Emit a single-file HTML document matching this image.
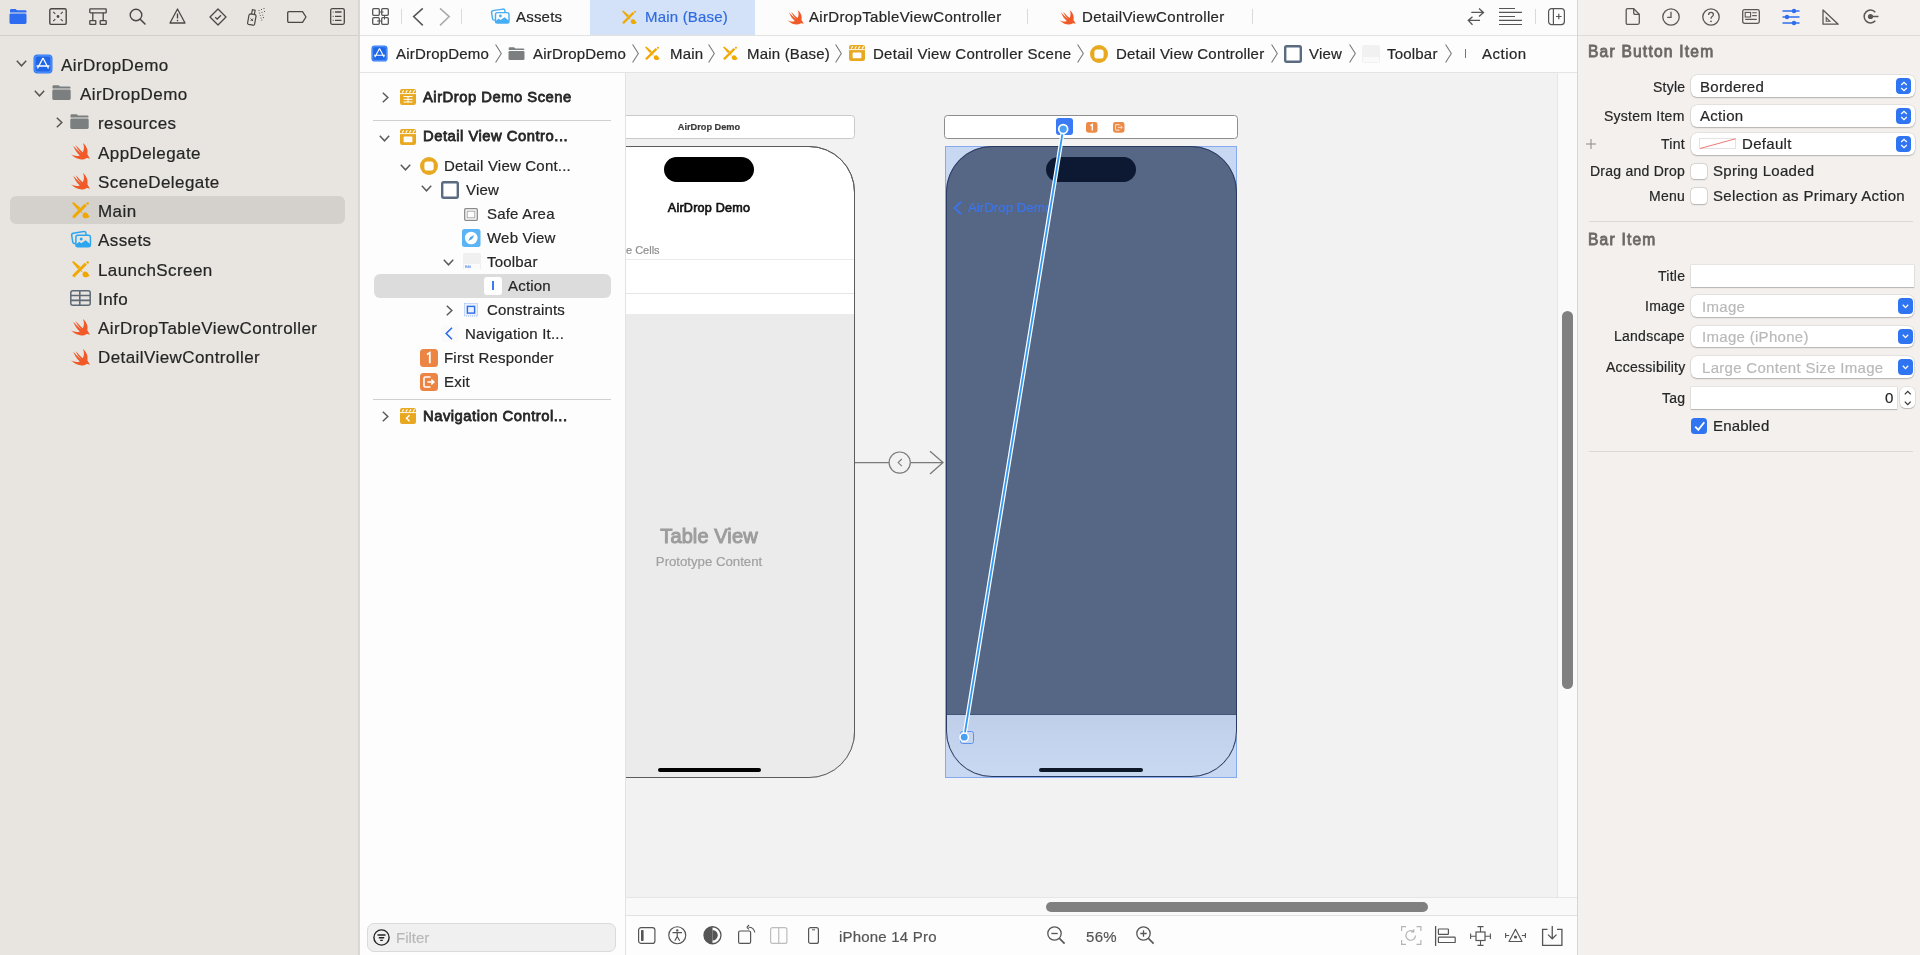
<!DOCTYPE html>
<html><head><meta charset="utf-8">
<style>
*{box-sizing:border-box;margin:0;padding:0}
html,body{width:1920px;height:955px;overflow:hidden;background:#fff;font-family:"Liberation Sans",sans-serif;color:#262626;position:relative}
.a{position:absolute}
.t{position:absolute;white-space:nowrap;will-change:transform;-webkit-text-stroke:0.2px currentColor}
svg{position:absolute;overflow:visible}
</style></head><body>
<div class="a" style="left:0px;top:0px;width:358px;height:955px;background:#e8e5e1"></div>
<div class="a" style="left:358px;top:0px;width:2px;height:955px;background:#dbd8d4"></div>
<div class="a" style="left:0px;top:35px;width:358px;height:1px;background:#d3d0cc"></div>
<svg style="left:9px;top:9px;" width="18" height="15" viewBox="0 0 18 15"><path d="M1 1.2Q1 0 2.2 0H6.5L8 1.3H16.5Q17.5 1.3 17.5 2.5V3.4H1Z" fill="#2d6cf0"/><rect x="0.5" y="4.4" width="17" height="10.6" rx="1.4" fill="#2d6cf0"/></svg>
<svg style="left:49px;top:8px;" width="18" height="17" viewBox="0 0 18 17"><rect x="0.8" y="0.8" width="16.4" height="15.6" rx="1.5" fill="none" stroke="#4a4744" stroke-width="1.4"/><circle cx="9" cy="8.5" r="1.4" fill="#4a4744"/><path d="M4.2 3.8L6.3 5.9M13.8 3.8L11.7 5.9M4.2 13.2L6.3 11.1M13.8 13.2L11.7 11.1" stroke="#4a4744" stroke-width="1.1"/></svg>
<svg style="left:89px;top:8px;" width="18" height="17" viewBox="0 0 18 17"><rect x="0.8" y="0.8" width="16.4" height="4" rx="0.6" fill="none" stroke="#4a4744" stroke-width="1.3"/><rect x="0.8" y="12.6" width="6" height="3.8" rx="0.6" fill="none" stroke="#4a4744" stroke-width="1.3"/><rect x="11.2" y="12.6" width="6" height="3.8" rx="0.6" fill="none" stroke="#4a4744" stroke-width="1.3"/><path d="M3.8 4.8V12.6M14.2 4.8V12.6" stroke="#4a4744" stroke-width="1.3"/></svg>
<svg style="left:129px;top:8px;" width="18" height="17" viewBox="0 0 18 17"><circle cx="7" cy="7" r="5.8" fill="none" stroke="#4a4744" stroke-width="1.4"/><path d="M11.2 11.2L16 16" stroke="#4a4744" stroke-width="1.6" stroke-linecap="round"/></svg>
<svg style="left:169px;top:8px;" width="17" height="16" viewBox="0 0 17 16"><path d="M8.5 1L16 15H1Z" fill="none" stroke="#4a4744" stroke-width="1.3" stroke-linejoin="round"/><path d="M8.5 5.5V10.5" stroke="#4a4744" stroke-width="1.4"/><circle cx="8.5" cy="12.6" r="0.8" fill="#4a4744"/></svg>
<svg style="left:209px;top:8px;" width="18" height="18" viewBox="0 0 18 18"><path d="M9 1L17 9L9 17L1 9Z" fill="none" stroke="#4a4744" stroke-width="1.3" stroke-linejoin="round"/><path d="M6.2 9.2L8.2 11L12 7.2" fill="none" stroke="#4a4744" stroke-width="1.3"/></svg>
<svg style="left:247px;top:8px;" width="21" height="18" viewBox="0 0 21 18"><path d="M2 7.2Q2.3 5.8 3.6 5.8L8 6.7Q9.2 7 9 8.3L7.6 16.2Q7.3 17.5 6 17.2L1.6 16.4Q0.4 16.1 0.6 14.9Z" fill="none" stroke="#4a4744" stroke-width="1.2"/><path d="M4.6 6L5.4 1.7L8.1 2.2L7.4 6.5" fill="none" stroke="#4a4744" stroke-width="1.2"/><path d="M3.6 10.6L6 13M6 10.6L3.6 13" stroke="#4a4744" stroke-width="1"/><g fill="#4a4744"><circle cx="12" cy="2.5" r="0.55"/><circle cx="14.5" cy="1.5" r="0.55"/><circle cx="17" cy="0.6" r="0.55"/><circle cx="12.5" cy="5" r="0.55"/><circle cx="15" cy="4.2" r="0.55"/><circle cx="17.5" cy="3.5" r="0.55"/><circle cx="13.3" cy="7.5" r="0.55"/><circle cx="15.8" cy="7" r="0.55"/><circle cx="14" cy="10" r="0.55"/><circle cx="16.5" cy="9.6" r="0.55"/><circle cx="14.8" cy="12" r="0.55"/></g></svg>
<svg style="left:287px;top:11px;" width="20" height="12" viewBox="0 0 20 12"><path d="M2 0.7H15.5L19 6L15.5 11.3H2Q0.7 11.3 0.7 10V2Q0.7 0.7 2 0.7Z" fill="none" stroke="#4a4744" stroke-width="1.3" stroke-linejoin="round"/></svg>
<svg style="left:330px;top:8px;" width="15" height="17" viewBox="0 0 15 17"><rect x="0.7" y="0.7" width="13.6" height="15.6" rx="1.5" fill="none" stroke="#4a4744" stroke-width="1.3"/><path d="M5 4H11.5M5 8.3H11.5M5 12.3H11.5" stroke="#4a4744" stroke-width="1.3"/><circle cx="3.2" cy="4" r="0.6" fill="#4a4744"/><circle cx="3.2" cy="8.3" r="0.6" fill="#4a4744"/><circle cx="3.2" cy="12.3" r="0.6" fill="#4a4744"/></svg>
<div class="a" style="left:10px;top:196px;width:335px;height:28px;background:#d4d0cc;border-radius:6px"></div>
<svg style="left:15.5px;top:60.2px;" width="11" height="7" viewBox="0 0 11 7"><path d="M0.8 0.8L5.5 5.8L10.2 0.8" fill="none" stroke="#57534f" stroke-width="1.5"/></svg>
<svg style="left:33.0px;top:53.7px;" width="20" height="20" viewBox="0 0 20 20"><rect x="0.5" y="0.5" width="19" height="19" rx="4" fill="#2e7bf6"/><rect x="2" y="2" width="16" height="16" rx="2.5" fill="#1f66e8" stroke="#7fb0ff" stroke-width="0.6"/><path d="M10 4L15.5 14.5M10 4L4.5 14.5M3.5 12H16.5" stroke="#fff" stroke-width="1.3" fill="none"/></svg>
<div class="t" style="left:61.3px;top:56.6px;font-size:17px;line-height:17px;color:#252525;letter-spacing:0.42px;">AirDropDemo</div>
<svg style="left:34.2px;top:89.5px;" width="11" height="7" viewBox="0 0 11 7"><path d="M0.8 0.8L5.5 5.8L10.2 0.8" fill="none" stroke="#57534f" stroke-width="1.5"/></svg>
<svg style="left:51.7px;top:85.0px;" width="19" height="15" viewBox="0 0 19 15"><path d="M0.5 1.4Q0.5 0.3 1.6 0.3H6.6L8.2 1.6H17.5Q18.5 1.6 18.5 2.6V3.4H0.5Z" fill="#7b7f80"/><rect x="0.3" y="4.6" width="18.4" height="10.4" rx="1.4" fill="#7b7f80"/></svg>
<div class="t" style="left:79.8px;top:85.9px;font-size:17px;line-height:17px;color:#252525;letter-spacing:0.42px;">AirDropDemo</div>
<svg style="left:56.0px;top:116.9px;" width="7" height="11" viewBox="0 0 7 11"><path d="M0.8 0.8L5.8 5.5L0.8 10.2" fill="none" stroke="#57534f" stroke-width="1.5"/></svg>
<svg style="left:70.4px;top:114.4px;" width="19" height="15" viewBox="0 0 19 15"><path d="M0.5 1.4Q0.5 0.3 1.6 0.3H6.6L8.2 1.6H17.5Q18.5 1.6 18.5 2.6V3.4H0.5Z" fill="#7b7f80"/><rect x="0.3" y="4.6" width="18.4" height="10.4" rx="1.4" fill="#7b7f80"/></svg>
<div class="t" style="left:98.4px;top:115.2px;font-size:17px;line-height:17px;color:#252525;letter-spacing:0.42px;">resources</div>
<svg style="left:71.4px;top:143.2px;" width="19" height="17" viewBox="0 0 19 17"><path d="M12 0.1C15.8 3.2 17.3 7.6 16.3 11.3C17.3 12.8 18.3 14.5 18.8 15.9C17.5 14.9 16.3 14.7 15.3 15.2C11.8 17.2 6 17.3 0.1 11.3C3.5 13.3 6.6 13.4 8.8 12.4C6 10.2 3.5 6.5 2.1 2.6C4.8 5.8 7.6 8.3 10.2 10.4C8 8 5.8 5 4.6 1.9C7.2 4.8 9.5 7 11.8 9.2C13.3 6.5 13.3 3.3 12 0.1Z" fill="#f05a28"/></svg>
<div class="t" style="left:98.4px;top:144.5px;font-size:17px;line-height:17px;color:#252525;letter-spacing:0.42px;">AppDelegate</div>
<svg style="left:71.4px;top:172.5px;" width="19" height="17" viewBox="0 0 19 17"><path d="M12 0.1C15.8 3.2 17.3 7.6 16.3 11.3C17.3 12.8 18.3 14.5 18.8 15.9C17.5 14.9 16.3 14.7 15.3 15.2C11.8 17.2 6 17.3 0.1 11.3C3.5 13.3 6.6 13.4 8.8 12.4C6 10.2 3.5 6.5 2.1 2.6C4.8 5.8 7.6 8.3 10.2 10.4C8 8 5.8 5 4.6 1.9C7.2 4.8 9.5 7 11.8 9.2C13.3 6.5 13.3 3.3 12 0.1Z" fill="#f05a28"/></svg>
<div class="t" style="left:98.4px;top:173.8px;font-size:17px;line-height:17px;color:#252525;letter-spacing:0.42px;">SceneDelegate</div>
<svg style="left:72.4px;top:201.8px;" width="18" height="17" viewBox="0 0 18 17"><path d="M1.2 15.4L13.8 2.8" stroke="#f0a800" stroke-width="2.9"/><path d="M0.9 15.6L0.6 16.2L1.3 15.9Z" fill="#f0a800"/><circle cx="15.6" cy="1.6" r="1.25" fill="#f0a800"/><path d="M0 1L1.4 0L8.3 5.7L6.1 8.3Z" fill="#f0a800"/><path d="M13 10.6C15.2 10.6 16.2 12.4 16.6 13.6L17.7 14.7C16.5 15.6 14.5 16.6 12.8 16.3C11 16 10.2 14.4 10.6 12.8C10.9 11.5 11.8 10.6 13 10.6Z" fill="#f0a800"/><circle cx="9.6" cy="10.2" r="0.7" fill="#f0a800"/></svg>
<div class="t" style="left:98.4px;top:203.1px;font-size:17px;line-height:17px;color:#252525;letter-spacing:0.42px;">Main</div>
<svg style="left:69.5px;top:229.5px;" width="21.5" height="18" viewBox="0 0 20 16"><g transform="rotate(-9 1.3 2.9)"><rect x="1.3" y="2.9" width="13.4" height="9.6" rx="1.8" fill="none" stroke="#2da6f0" stroke-width="1.4"/></g><rect x="5.5" y="4.6" width="13.5" height="10.5" rx="1.8" fill="#e8e5e1" stroke="#2da6f0" stroke-width="1.4"/><circle cx="10.4" cy="8" r="1.4" fill="#2da6f0"/><path d="M5.5 13.2L8.7 10.6L10.5 12L14.6 9.2L19 12.8V13.4Q19 15.1 17.3 15.1H7.2Q5.5 15.1 5.5 13.4Z" fill="#2da6f0"/></svg>
<div class="t" style="left:98.4px;top:232.3px;font-size:17px;line-height:17px;color:#252525;letter-spacing:0.42px;">Assets</div>
<svg style="left:72.4px;top:260.5px;" width="18" height="17" viewBox="0 0 18 17"><path d="M1.2 15.4L13.8 2.8" stroke="#f0a800" stroke-width="2.9"/><path d="M0.9 15.6L0.6 16.2L1.3 15.9Z" fill="#f0a800"/><circle cx="15.6" cy="1.6" r="1.25" fill="#f0a800"/><path d="M0 1L1.4 0L8.3 5.7L6.1 8.3Z" fill="#f0a800"/><path d="M13 10.6C15.2 10.6 16.2 12.4 16.6 13.6L17.7 14.7C16.5 15.6 14.5 16.6 12.8 16.3C11 16 10.2 14.4 10.6 12.8C10.9 11.5 11.8 10.6 13 10.6Z" fill="#f0a800"/><circle cx="9.6" cy="10.2" r="0.7" fill="#f0a800"/></svg>
<div class="t" style="left:98.4px;top:261.6px;font-size:17px;line-height:17px;color:#252525;letter-spacing:0.42px;">LaunchScreen</div>
<svg style="left:70.4px;top:290.3px;" width="21" height="16" viewBox="0 0 21 16"><rect x="0.8" y="0.8" width="19.4" height="14.4" rx="2" fill="none" stroke="#5d6a76" stroke-width="1.5"/><path d="M1 5.5H20M1 10.4H20M9.8 1V15" stroke="#5d6a76" stroke-width="1.6"/></svg>
<div class="t" style="left:98.4px;top:290.9px;font-size:17px;line-height:17px;color:#252525;letter-spacing:0.42px;">Info</div>
<svg style="left:71.4px;top:319.2px;" width="19" height="17" viewBox="0 0 19 17"><path d="M12 0.1C15.8 3.2 17.3 7.6 16.3 11.3C17.3 12.8 18.3 14.5 18.8 15.9C17.5 14.9 16.3 14.7 15.3 15.2C11.8 17.2 6 17.3 0.1 11.3C3.5 13.3 6.6 13.4 8.8 12.4C6 10.2 3.5 6.5 2.1 2.6C4.8 5.8 7.6 8.3 10.2 10.4C8 8 5.8 5 4.6 1.9C7.2 4.8 9.5 7 11.8 9.2C13.3 6.5 13.3 3.3 12 0.1Z" fill="#f05a28"/></svg>
<div class="t" style="left:98.4px;top:320.2px;font-size:17px;line-height:17px;color:#252525;letter-spacing:0.42px;">AirDropTableViewController</div>
<svg style="left:71.4px;top:348.5px;" width="19" height="17" viewBox="0 0 19 17"><path d="M12 0.1C15.8 3.2 17.3 7.6 16.3 11.3C17.3 12.8 18.3 14.5 18.8 15.9C17.5 14.9 16.3 14.7 15.3 15.2C11.8 17.2 6 17.3 0.1 11.3C3.5 13.3 6.6 13.4 8.8 12.4C6 10.2 3.5 6.5 2.1 2.6C4.8 5.8 7.6 8.3 10.2 10.4C8 8 5.8 5 4.6 1.9C7.2 4.8 9.5 7 11.8 9.2C13.3 6.5 13.3 3.3 12 0.1Z" fill="#f05a28"/></svg>
<div class="t" style="left:98.4px;top:349.4px;font-size:17px;line-height:17px;color:#252525;letter-spacing:0.42px;">DetailViewController</div>
<div class="a" style="left:360px;top:0px;width:1218px;height:35px;background:#fcfcfc"></div>
<div class="a" style="left:360px;top:35px;width:1218px;height:1px;background:#e2e2e2"></div>
<div class="a" style="left:360px;top:36px;width:1218px;height:36px;background:#fdfdfd"></div>
<div class="a" style="left:360px;top:72px;width:1218px;height:1px;background:#e4e4e4"></div>
<div class="a" style="left:360px;top:73px;width:265px;height:882px;background:#fdfdfd"></div>
<div class="a" style="left:625px;top:73px;width:1px;height:882px;background:#e2e2e2"></div>
<div class="a" style="left:1577px;top:0px;width:1px;height:955px;background:#d9d6d2"></div>
<svg style="left:372px;top:8px;" width="17" height="17" viewBox="0 0 17 17"><rect x="0.7" y="0.7" width="6.6" height="6.6" rx="1" fill="none" stroke="#555555" stroke-width="1.3"/><rect x="9.7" y="0.7" width="6.6" height="6.6" rx="1" fill="none" stroke="#555555" stroke-width="1.3"/><rect x="0.7" y="9.7" width="6.6" height="6.6" rx="1" fill="none" stroke="#555555" stroke-width="1.3"/><rect x="9.7" y="9.7" width="6.6" height="6.6" rx="1" fill="none" stroke="#555555" stroke-width="1.3"/><path d="M7.3 4H11.5M12.5 7.3V11.5M9.7 13H5" stroke="#555555" stroke-width="1"/></svg>
<div class="a" style="left:401px;top:9px;width:1px;height:15px;background:#dadada"></div>
<svg style="left:413px;top:8px;" width="11" height="18" viewBox="0 0 11 18"><path d="M9.8 0.4L0.6 8.6L9.8 17.4" fill="none" stroke="#555555" stroke-width="1.5"/></svg>
<svg style="left:439px;top:8px;" width="11" height="18" viewBox="0 0 11 18"><path d="M1 0.4L10.2 8.6L1 17.4" fill="none" stroke="#aaaaaa" stroke-width="1.5"/></svg>
<div class="a" style="left:461px;top:9px;width:1px;height:15px;background:#dadada"></div>
<svg style="left:490px;top:8.3px;" width="20" height="16" viewBox="0 0 20 16"><g transform="rotate(-9 1.3 2.9)"><rect x="1.3" y="2.9" width="13.4" height="9.6" rx="1.8" fill="none" stroke="#47adf5" stroke-width="1.4"/></g><rect x="5.5" y="4.6" width="13.5" height="10.5" rx="1.8" fill="#fcfcfc" stroke="#47adf5" stroke-width="1.4"/><circle cx="10.4" cy="8" r="1.4" fill="#47adf5"/><path d="M5.5 13.2L8.7 10.6L10.5 12L14.6 9.2L19 12.8V13.4Q19 15.1 17.3 15.1H7.2Q5.5 15.1 5.5 13.4Z" fill="#47adf5"/></svg>
<div class="t" style="left:515.5px;top:9.1px;font-size:15px;line-height:15px;color:#262626;letter-spacing:0.2px;">Assets</div>
<div class="a" style="left:590px;top:0px;width:165px;height:35px;background:#d3e2f8"></div>
<svg style="left:621.5px;top:9.5px;" width="15" height="15" viewBox="0 0 18 17"><path d="M1.2 15.4L13.8 2.8" stroke="#f0a800" stroke-width="2.9"/><path d="M0.9 15.6L0.6 16.2L1.3 15.9Z" fill="#f0a800"/><circle cx="15.6" cy="1.6" r="1.25" fill="#f0a800"/><path d="M0 1L1.4 0L8.3 5.7L6.1 8.3Z" fill="#f0a800"/><path d="M13 10.6C15.2 10.6 16.2 12.4 16.6 13.6L17.7 14.7C16.5 15.6 14.5 16.6 12.8 16.3C11 16 10.2 14.4 10.6 12.8C10.9 11.5 11.8 10.6 13 10.6Z" fill="#f0a800"/><circle cx="9.6" cy="10.2" r="0.7" fill="#f0a800"/></svg>
<div class="t" style="left:644.8px;top:9.1px;font-size:15px;line-height:15px;color:#2f6ae0;letter-spacing:0.2px;">Main (Base)</div>
<svg style="left:786.5px;top:10px;" width="17" height="15" viewBox="0 0 19 17"><path d="M12 0.1C15.8 3.2 17.3 7.6 16.3 11.3C17.3 12.8 18.3 14.5 18.8 15.9C17.5 14.9 16.3 14.7 15.3 15.2C11.8 17.2 6 17.3 0.1 11.3C3.5 13.3 6.6 13.4 8.8 12.4C6 10.2 3.5 6.5 2.1 2.6C4.8 5.8 7.6 8.3 10.2 10.4C8 8 5.8 5 4.6 1.9C7.2 4.8 9.5 7 11.8 9.2C13.3 6.5 13.3 3.3 12 0.1Z" fill="#f05a28"/></svg>
<div class="t" style="left:809.3px;top:9.1px;font-size:15px;line-height:15px;color:#262626;letter-spacing:0.33px;">AirDropTableViewController</div>
<div class="a" style="left:1027px;top:9px;width:1px;height:15px;background:#dadada"></div>
<svg style="left:1059px;top:10px;" width="17" height="15" viewBox="0 0 19 17"><path d="M12 0.1C15.8 3.2 17.3 7.6 16.3 11.3C17.3 12.8 18.3 14.5 18.8 15.9C17.5 14.9 16.3 14.7 15.3 15.2C11.8 17.2 6 17.3 0.1 11.3C3.5 13.3 6.6 13.4 8.8 12.4C6 10.2 3.5 6.5 2.1 2.6C4.8 5.8 7.6 8.3 10.2 10.4C8 8 5.8 5 4.6 1.9C7.2 4.8 9.5 7 11.8 9.2C13.3 6.5 13.3 3.3 12 0.1Z" fill="#f05a28"/></svg>
<div class="t" style="left:1082.0px;top:9.1px;font-size:15px;line-height:15px;color:#262626;letter-spacing:0.35px;">DetailViewController</div>
<div class="a" style="left:1252px;top:9px;width:1px;height:15px;background:#dadada"></div>
<svg style="left:1467px;top:8px;" width="18" height="18" viewBox="0 0 18 18"><path d="M4.3 4.4H16.5M12 0.4L16.5 4.4L12 8.5M13 12.4H1.3M5.5 8.8L1.3 12.4L5.5 16.7" fill="none" stroke="#555555" stroke-width="1.3"/></svg>
<svg style="left:1498px;top:8px;" width="24" height="17" viewBox="0 0 24 17"><path d="M1 0.5H17M1 4.4H24M1 8.5H17M1 12.4H24M1 16.5H24" stroke="#555555" stroke-width="1.2"/></svg>
<div class="a" style="left:1535px;top:9px;width:1px;height:15px;background:#dadada"></div>
<svg style="left:1548px;top:8px;" width="17" height="17" viewBox="0 0 17 17"><rect x="0.6" y="0.6" width="15.8" height="16" rx="3" fill="none" stroke="#555555" stroke-width="1.2"/><path d="M5.4 0.6V16.6M8 8.5H13.6M10.8 5.7V11.3" stroke="#555555" stroke-width="1.2"/></svg>
<svg style="left:371px;top:45px;" width="17" height="17" viewBox="0 0 20 20"><rect x="0.5" y="0.5" width="19" height="19" rx="4" fill="#2e7bf6"/><rect x="2" y="2" width="16" height="16" rx="2.5" fill="#1f66e8" stroke="#7fb0ff" stroke-width="0.6"/><path d="M10 4L15.5 14.5M10 4L4.5 14.5M3.5 12H16.5" stroke="#fff" stroke-width="1.3" fill="none"/></svg>
<div class="t" style="left:395.8px;top:46.2px;font-size:15px;line-height:15px;color:#262626;letter-spacing:0.2px;">AirDropDemo</div>
<svg style="left:494.5px;top:44px;" width="7" height="19" viewBox="0 0 7 19"><path d="M0.6 0.5L6.3 9.5L0.6 18.5" fill="none" stroke="#7a7a7a" stroke-width="1.1"/></svg>
<svg style="left:508px;top:47px;" width="17" height="13" viewBox="0 0 19 15"><path d="M0.5 1.4Q0.5 0.3 1.6 0.3H6.6L8.2 1.6H17.5Q18.5 1.6 18.5 2.6V3.4H0.5Z" fill="#7b7f80"/><rect x="0.3" y="4.6" width="18.4" height="10.4" rx="1.4" fill="#7b7f80"/></svg>
<div class="t" style="left:533.2px;top:46.2px;font-size:15px;line-height:15px;color:#262626;letter-spacing:0.2px;">AirDropDemo</div>
<svg style="left:632px;top:44px;" width="7" height="19" viewBox="0 0 7 19"><path d="M0.6 0.5L6.3 9.5L0.6 18.5" fill="none" stroke="#7a7a7a" stroke-width="1.1"/></svg>
<svg style="left:645px;top:46px;" width="15" height="15" viewBox="0 0 18 17"><path d="M1.2 15.4L13.8 2.8" stroke="#f0a800" stroke-width="2.9"/><path d="M0.9 15.6L0.6 16.2L1.3 15.9Z" fill="#f0a800"/><circle cx="15.6" cy="1.6" r="1.25" fill="#f0a800"/><path d="M0 1L1.4 0L8.3 5.7L6.1 8.3Z" fill="#f0a800"/><path d="M13 10.6C15.2 10.6 16.2 12.4 16.6 13.6L17.7 14.7C16.5 15.6 14.5 16.6 12.8 16.3C11 16 10.2 14.4 10.6 12.8C10.9 11.5 11.8 10.6 13 10.6Z" fill="#f0a800"/><circle cx="9.6" cy="10.2" r="0.7" fill="#f0a800"/></svg>
<div class="t" style="left:669.5px;top:46.2px;font-size:15px;line-height:15px;color:#262626;letter-spacing:0.2px;">Main</div>
<svg style="left:708px;top:44px;" width="7" height="19" viewBox="0 0 7 19"><path d="M0.6 0.5L6.3 9.5L0.6 18.5" fill="none" stroke="#7a7a7a" stroke-width="1.1"/></svg>
<svg style="left:722.5px;top:46px;" width="15" height="15" viewBox="0 0 18 17"><path d="M1.2 15.4L13.8 2.8" stroke="#f0a800" stroke-width="2.9"/><path d="M0.9 15.6L0.6 16.2L1.3 15.9Z" fill="#f0a800"/><circle cx="15.6" cy="1.6" r="1.25" fill="#f0a800"/><path d="M0 1L1.4 0L8.3 5.7L6.1 8.3Z" fill="#f0a800"/><path d="M13 10.6C15.2 10.6 16.2 12.4 16.6 13.6L17.7 14.7C16.5 15.6 14.5 16.6 12.8 16.3C11 16 10.2 14.4 10.6 12.8C10.9 11.5 11.8 10.6 13 10.6Z" fill="#f0a800"/><circle cx="9.6" cy="10.2" r="0.7" fill="#f0a800"/></svg>
<div class="t" style="left:747.0px;top:46.2px;font-size:15px;line-height:15px;color:#262626;letter-spacing:0.2px;">Main (Base)</div>
<svg style="left:835px;top:44px;" width="7" height="19" viewBox="0 0 7 19"><path d="M0.6 0.5L6.3 9.5L0.6 18.5" fill="none" stroke="#7a7a7a" stroke-width="1.1"/></svg>
<svg style="left:849px;top:45px;" width="16" height="16" viewBox="0 0 16 16"><rect x="0" y="0" width="16" height="16" rx="2.2" fill="#e8a820"/><path d="M0 4.6H16" stroke="#fff" stroke-width="0.9"/><path d="M2.2 3.6L3.8 1.2M5.8 3.6L7.4 1.2M9.4 3.6L11 1.2M13 3.6L14.6 1.2" stroke="#fff" stroke-width="1.1"/><rect x="3.6" y="7.6" width="8.8" height="5.6" rx="0.8" fill="#fff"/></svg>
<div class="t" style="left:873.0px;top:46.2px;font-size:15px;line-height:15px;color:#262626;letter-spacing:0.28px;">Detail View Controller Scene</div>
<svg style="left:1077px;top:44px;" width="7" height="19" viewBox="0 0 7 19"><path d="M0.6 0.5L6.3 9.5L0.6 18.5" fill="none" stroke="#7a7a7a" stroke-width="1.1"/></svg>
<svg style="left:1090px;top:45px;" width="18" height="18" viewBox="0 0 18 18"><circle cx="9" cy="9" r="9" fill="#e8a820"/><rect x="4.4" y="4.4" width="9.2" height="9.2" rx="2.6" fill="#fff"/></svg>
<div class="t" style="left:1115.5px;top:46.2px;font-size:15px;line-height:15px;color:#262626;letter-spacing:0.2px;">Detail View Controller</div>
<svg style="left:1271px;top:44px;" width="7" height="19" viewBox="0 0 7 19"><path d="M0.6 0.5L6.3 9.5L0.6 18.5" fill="none" stroke="#7a7a7a" stroke-width="1.1"/></svg>
<svg style="left:1284px;top:45px;" width="18" height="18" viewBox="0 0 18 18"><rect x="1.2" y="1.2" width="15.6" height="15.6" rx="1.5" fill="#fff" stroke="#5a6b80" stroke-width="2.4"/></svg>
<div class="t" style="left:1309.2px;top:46.2px;font-size:15px;line-height:15px;color:#262626;letter-spacing:0.2px;">View</div>
<svg style="left:1349px;top:44px;" width="7" height="19" viewBox="0 0 7 19"><path d="M0.6 0.5L6.3 9.5L0.6 18.5" fill="none" stroke="#7a7a7a" stroke-width="1.1"/></svg>
<div class="a" style="left:1362px;top:45px;width:18px;height:18px;background:#f1f1f1;border-radius:2px"></div>
<div class="a" style="left:1363px;top:57px;width:16px;height:5px;background:#fafafa"></div>
<div class="t" style="left:1387.0px;top:46.2px;font-size:15px;line-height:15px;color:#262626;letter-spacing:0.2px;">Toolbar</div>
<svg style="left:1444.5px;top:44px;" width="7" height="19" viewBox="0 0 7 19"><path d="M0.6 0.5L6.3 9.5L0.6 18.5" fill="none" stroke="#7a7a7a" stroke-width="1.1"/></svg>
<div class="a" style="left:1465px;top:49px;width:1.4px;height:9px;background:#3b7cf0"></div>
<div class="t" style="left:1482.0px;top:46.2px;font-size:15px;line-height:15px;color:#262626;letter-spacing:0.5px;">Action</div>
<svg style="left:381.5px;top:91.5px;" width="7" height="11" viewBox="0 0 7 11"><path d="M0.8 0.8L5.8 5.5L0.8 10.2" fill="none" stroke="#5a5a5a" stroke-width="1.5"/></svg>
<svg style="left:399.7px;top:89.2px;" width="16" height="16" viewBox="0 0 16 16"><rect x="0" y="0" width="16" height="16" rx="2.2" fill="#e8a820"/><path d="M0 4.6H16" stroke="#fff" stroke-width="0.9"/><path d="M2.2 3.6L3.8 1.2M5.8 3.6L7.4 1.2M9.4 3.6L11 1.2M13 3.6L14.6 1.2" stroke="#fff" stroke-width="1.1"/><path d="M3.5 7.5H12.5M3.5 10.3H12.5M3.5 13H12.5M8 7V13.5" stroke="#fff" stroke-width="1"/></svg>
<div class="t" style="left:423.0px;top:89.6px;font-size:14.8px;line-height:14.8px;color:#262626;letter-spacing:0.5px;-webkit-text-stroke:0.77px #262626;">AirDrop Demo Scene</div>
<div class="a" style="left:373px;top:120px;width:238px;height:1px;background:#d0d0d0"></div>
<svg style="left:379px;top:134.5px;" width="11" height="7" viewBox="0 0 11 7"><path d="M0.8 0.8L5.5 5.8L10.2 0.8" fill="none" stroke="#5a5a5a" stroke-width="1.5"/></svg>
<svg style="left:399.7px;top:129px;" width="16" height="16" viewBox="0 0 16 16"><rect x="0" y="0" width="16" height="16" rx="2.2" fill="#e8a820"/><path d="M0 4.6H16" stroke="#fff" stroke-width="0.9"/><path d="M2.2 3.6L3.8 1.2M5.8 3.6L7.4 1.2M9.4 3.6L11 1.2M13 3.6L14.6 1.2" stroke="#fff" stroke-width="1.1"/><rect x="3.6" y="7.6" width="8.8" height="5.6" rx="0.8" fill="#fff"/></svg>
<div class="t" style="left:423.0px;top:129.3px;font-size:14.8px;line-height:14.8px;color:#262626;letter-spacing:0.5px;-webkit-text-stroke:0.77px #262626;">Detail View Contro...</div>
<svg style="left:400px;top:164px;" width="11" height="7" viewBox="0 0 11 7"><path d="M0.8 0.8L5.5 5.8L10.2 0.8" fill="none" stroke="#5a5a5a" stroke-width="1.5"/></svg>
<svg style="left:420px;top:157px;" width="18" height="18" viewBox="0 0 18 18"><circle cx="9" cy="9" r="9" fill="#e8a820"/><rect x="4.4" y="4.4" width="9.2" height="9.2" rx="2.6" fill="#fff"/></svg>
<div class="t" style="left:444.0px;top:158.3px;font-size:15px;line-height:15px;color:#262626;letter-spacing:0.2px;">Detail View Cont...</div>
<svg style="left:421px;top:185px;" width="11" height="7" viewBox="0 0 11 7"><path d="M0.8 0.8L5.5 5.8L10.2 0.8" fill="none" stroke="#5a5a5a" stroke-width="1.5"/></svg>
<svg style="left:441.3px;top:181px;" width="18" height="18" viewBox="0 0 18 18"><rect x="1.2" y="1.2" width="15.6" height="15.6" rx="1.5" fill="#fff" stroke="#5a6b80" stroke-width="2.4"/></svg>
<div class="t" style="left:465.5px;top:182.2px;font-size:15px;line-height:15px;color:#262626;letter-spacing:0.2px;">View</div>
<svg style="left:464px;top:207.5px;" width="14" height="13" viewBox="0 0 14 13"><rect x="0.7" y="0.7" width="12.6" height="11.6" rx="1" fill="none" stroke="#8a8a8a" stroke-width="1.3"/><rect x="3.2" y="3.2" width="7.6" height="6.6" fill="none" stroke="#a8a8a8" stroke-width="1"/></svg>
<div class="t" style="left:486.5px;top:206.2px;font-size:15px;line-height:15px;color:#262626;letter-spacing:0.2px;">Safe Area</div>
<svg style="left:462.2px;top:228.8px;" width="18.5" height="18" viewBox="0 0 18.5 18"><rect x="0" y="0" width="18.5" height="18" rx="2.5" fill="#5ab4f5"/><circle cx="9.25" cy="9" r="6.3" fill="#fff"/><path d="M12.3 5.9L10.2 10L6.2 12.1L8.3 8Z" fill="#4aa6ee"/></svg>
<div class="t" style="left:486.5px;top:230.2px;font-size:15px;line-height:15px;color:#262626;letter-spacing:0.2px;">Web View</div>
<svg style="left:442.5px;top:259px;" width="11" height="7" viewBox="0 0 11 7"><path d="M0.8 0.8L5.5 5.8L10.2 0.8" fill="none" stroke="#5a5a5a" stroke-width="1.5"/></svg>
<div class="a" style="left:462.7px;top:253px;width:18px;height:17px;background:#f0f0f0;border-radius:2px"></div>
<div class="a" style="left:463.5px;top:264px;width:16.5px;height:6px;background:#fbfbfb"></div>
<div class="t" style="left:465.0px;top:265.6px;font-size:3.5px;line-height:3.5px;color:#6f9ff0;">Edit</div>
<div class="t" style="left:486.5px;top:254.2px;font-size:15px;line-height:15px;color:#262626;letter-spacing:0.2px;">Toolbar</div>
<div class="a" style="left:373.5px;top:274px;width:237.5px;height:24px;background:#dcdcdc;border-radius:6px"></div>
<div class="a" style="left:483.5px;top:276.6px;width:18.3px;height:18.4px;background:#fff;border-radius:3px"></div>
<div class="a" style="left:492px;top:281px;width:1.5px;height:9px;background:#3b7cf0"></div>
<div class="t" style="left:508.0px;top:278.2px;font-size:15px;line-height:15px;color:#262626;letter-spacing:0.2px;">Action</div>
<svg style="left:445.5px;top:304.5px;" width="7" height="11" viewBox="0 0 7 11"><path d="M0.8 0.8L5.8 5.5L0.8 10.2" fill="none" stroke="#5a5a5a" stroke-width="1.5"/></svg>
<svg style="left:464px;top:303px;" width="14" height="13.5" viewBox="0 0 14 13.5"><rect x="0.5" y="0.5" width="13" height="12.5" fill="#eaf1fd" stroke="#7aa6ef" stroke-width="0.8" stroke-dasharray="1 1"/><rect x="3.4" y="3.4" width="7.2" height="6.7" fill="none" stroke="#2d6be8" stroke-width="1.4"/></svg>
<div class="t" style="left:486.5px;top:302.2px;font-size:15px;line-height:15px;color:#262626;letter-spacing:0.2px;">Constraints</div>
<div class="a" style="left:441.3px;top:325.3px;width:17.7px;height:17.2px;background:#fafafa;border-radius:3px"></div>
<svg style="left:445px;top:327px;" width="8" height="13" viewBox="0 0 8 13"><path d="M7 0.7L1.2 6.5L7 12.3" fill="none" stroke="#2d6be8" stroke-width="1.6"/></svg>
<div class="t" style="left:465.0px;top:326.2px;font-size:15px;line-height:15px;color:#262626;letter-spacing:0.2px;">Navigation It...</div>
<svg style="left:420px;top:348.8px;" width="18" height="18" viewBox="0 0 18 18"><rect x="0" y="0" width="18" height="18" rx="3.5" fill="#ec8444"/><path d="M7 5.6L9.8 3.8V14.2" fill="none" stroke="#fff" stroke-width="1.8"/></svg>
<div class="t" style="left:444.0px;top:350.2px;font-size:15px;line-height:15px;color:#262626;letter-spacing:0.2px;">First Responder</div>
<svg style="left:420px;top:372.7px;" width="18" height="18" viewBox="0 0 18 18"><rect x="0" y="0" width="18" height="18" rx="3.5" fill="#ec8444"/><path d="M10.5 4H5.2Q4 4 4 5.2V12.8Q4 14 5.2 14H10.5" fill="none" stroke="#fff" stroke-width="1.6"/><path d="M7.5 9H13.5M11.3 6.6L13.9 9L11.3 11.4" fill="none" stroke="#fff" stroke-width="1.5"/></svg>
<div class="t" style="left:444.0px;top:374.2px;font-size:15px;line-height:15px;color:#262626;letter-spacing:0.2px;">Exit</div>
<div class="a" style="left:373px;top:399px;width:238px;height:1px;background:#d0d0d0"></div>
<svg style="left:381.5px;top:411px;" width="7" height="11" viewBox="0 0 7 11"><path d="M0.8 0.8L5.8 5.5L0.8 10.2" fill="none" stroke="#5a5a5a" stroke-width="1.5"/></svg>
<svg style="left:399.7px;top:408.3px;" width="16" height="16" viewBox="0 0 16 16"><rect x="0" y="0" width="16" height="16" rx="2.2" fill="#e8a820"/><path d="M0 4.6H16" stroke="#fff" stroke-width="0.9"/><path d="M2.2 3.6L3.8 1.2M5.8 3.6L7.4 1.2M9.4 3.6L11 1.2M13 3.6L14.6 1.2" stroke="#fff" stroke-width="1.1"/><path d="M9.5 7.2L6.5 10.2L9.5 13.2" fill="none" stroke="#fff" stroke-width="1.5"/></svg>
<div class="t" style="left:423.0px;top:408.7px;font-size:14.8px;line-height:14.8px;color:#262626;letter-spacing:0.5px;-webkit-text-stroke:0.77px #262626;">Navigation Control...</div>
<div class="a" style="left:366.5px;top:923px;width:249.5px;height:28.5px;background:#f0f0f0;border:1px solid #dadada;border-radius:7px"></div>
<svg style="left:373px;top:929px;" width="17" height="17" viewBox="0 0 17 17"><circle cx="8.5" cy="8.5" r="7.6" fill="none" stroke="#222" stroke-width="1.4"/><path d="M4.5 6H12.5M5.8 8.7H11.2M7.2 11.4H9.8" stroke="#222" stroke-width="1.4"/></svg>
<div class="t" style="left:395.5px;top:929.8px;font-size:15px;line-height:15px;color:#b8b8b8;">Filter</div>
<div class="a" style="left:626px;top:73px;width:931px;height:824px;background:#f2f2f2"></div>
<div class="a" style="left:626px;top:73px;width:931px;height:824px;overflow:hidden">
<div class="a" style="left:-63px;top:42.2px;width:292.4px;height:23.8px;background:#fff;border:1px solid #c9c9c9;border-radius:3.5px"></div>
<div class="t" style="left:-217.0px;width:600px;top:49.8px;font-size:9.2px;line-height:9.2px;color:#3a3a3a;text-align:center;font-weight:bold;">AirDrop Demo</div>
<div class="a" style="left:-63px;top:73px;width:292.4px;height:631.5px;background:#fff;border:1px solid #5c5c5c;border-radius:46px;overflow:hidden"></div>
<div class="a" style="left:-63px;top:73px;width:292.4px;height:631.5px;border-radius:46px;overflow:hidden">
<div class="a" style="left:0px;top:146.5px;width:292.4px;height:1px;background:#e6e6e6"></div>
<div class="a" style="left:0px;top:113px;width:292.4px;height:1px;background:#e9e9e9"></div>
<div class="a" style="left:1px;top:167.8px;width:290.4px;height:470px;background:#ebebeb"></div>
</div>
<div class="a" style="left:-63px;top:73px;width:292.4px;height:631.5px;border:1px solid #5c5c5c;border-radius:46px"></div>
<div class="a" style="left:38px;top:83.6px;width:90px;height:25.2px;background:#000;border-radius:12.6px"></div>
<div class="t" style="left:-217.0px;width:600px;top:128.5px;font-size:12.6px;line-height:12.6px;color:#111;text-align:center;letter-spacing:0.22px;-webkit-text-stroke:0.66px #111;">AirDrop Demo</div>
<div class="t" style="left:-40.7px;top:172.1px;font-size:11px;line-height:11px;color:#8e8e8e;">Prototype Cells</div>
<div class="t" style="left:-217.0px;width:600px;top:452.6px;font-size:20px;line-height:20px;color:#9d9d9d;text-align:center;letter-spacing:0.1px;-webkit-text-stroke:1.04px #9d9d9d;">Table View</div>
<div class="t" style="left:-217.0px;width:600px;top:482.2px;font-size:13.2px;line-height:13.2px;color:#a0a0a0;text-align:center;">Prototype Content</div>
<div class="a" style="left:31.8px;top:695.2px;width:103.5px;height:3.8px;background:#000;border-radius:2px"></div>
<svg style="left:229px;top:377px;" width="92" height="26" viewBox="0 0 92 26"><path d="M0 12.6H34M55.3 12.6H87.5M75 1.2L88 12.6L75 24" fill="none" stroke="#7a7a7a" stroke-width="1.3"/><circle cx="44.7" cy="12.6" r="10.6" fill="none" stroke="#7a7a7a" stroke-width="1.2"/><path d="M46.8 9L43.2 12.6L46.8 16.2" fill="none" stroke="#7a7a7a" stroke-width="1.1"/></svg>
<div class="a" style="left:318.3px;top:42px;width:293.3px;height:23.8px;background:#fff;border:1px solid #8d8d8d;border-radius:3.5px"></div>
<div class="a" style="left:429.9px;top:45.2px;width:17.2px;height:17.1px;background:#3a7af5;border-radius:3px"></div>
<svg style="left:459.79999999999995px;top:48.8px;" width="11.5" height="10.7" viewBox="0 0 11.5 10.7"><rect x="0" y="0" width="11.5" height="10.7" rx="2.4" fill="#ec8a48"/><path d="M4.4 3.6L6.3 2.4V8.5" fill="none" stroke="#fff" stroke-width="1.4"/></svg>
<svg style="left:487.20000000000005px;top:48.8px;" width="11.5" height="10.7" viewBox="0 0 11.5 10.7"><rect x="0" y="0" width="11.5" height="10.7" rx="2.4" fill="#ec8a48"/><path d="M6.5 2.6H3.3Q2.5 2.6 2.5 3.4V7.3Q2.5 8.1 3.3 8.1H6.5" fill="none" stroke="#f8d9c4" stroke-width="1.1"/><path d="M4.8 5.35H9.2M7.6 3.8L9.3 5.35L7.6 6.9" fill="none" stroke="#f8d9c4" stroke-width="1"/></svg>
<div class="a" style="left:319px;top:73px;width:292px;height:631.5px;background:#c9d8f2;border:1px solid #86a9ef"></div>
<div class="a" style="left:320px;top:73.30000000000001px;width:290.5px;height:631px;border-radius:46px;overflow:hidden;background:#566685">
<div class="a" style="left:0px;top:568.7px;width:290.5px;height:63px;background:linear-gradient(#bfcfe9,#cad9f2)"></div>
<div class="a" style="left:0px;top:568.2px;width:290.5px;height:1px;background:#44557a"></div>
</div>
<div class="a" style="left:320px;top:73.3px;width:290.5px;height:631px;border:1px solid #2a3b62;border-radius:46px"></div>
<div class="a" style="left:419.7px;top:83.5px;width:90.5px;height:25.3px;background:#0d1933;border-radius:12.6px"></div>
<svg style="left:326.6px;top:127.69999999999999px;" width="9" height="14" viewBox="0 0 9 14"><path d="M8 0.8L1.5 7L8 13.2" fill="none" stroke="#3a76ee" stroke-width="1.8"/></svg>
<div class="t" style="left:341.5px;top:128.2px;font-size:13.2px;line-height:13.2px;color:#3a76ee;letter-spacing:0.05px;">AirDrop Demo</div>
<div class="a" style="left:413px;top:695px;width:104px;height:3.5px;background:#0f1829;border-radius:2px"></div>
<div class="a" style="left:333.7px;top:657.8px;width:14px;height:13px;border:1.3px solid #5b92f0;border-radius:2.5px;background:rgba(200,216,245,0.5)"></div>
<svg style="left:0px;top:0px;" width="931" height="824" viewBox="0 0 931 824"><path d="M437.20000000000005 56.099999999999994L338.20000000000005 664.2" stroke="#fff" stroke-width="4.2" stroke-linecap="round"/><path d="M437.20000000000005 56.099999999999994L338.20000000000005 664.2" stroke="#2f9af5" stroke-width="1.8"/><circle cx="437.20000000000005" cy="56.099999999999994" r="5.3" fill="#fff"/><circle cx="437.20000000000005" cy="56.099999999999994" r="3.6" fill="#4a9ff2"/><circle cx="338.20000000000005" cy="664.2" r="4.9" fill="#fff"/><circle cx="338.20000000000005" cy="664.2" r="3.4" fill="#4a9ff2"/></svg>
</div>
<div class="a" style="left:1557px;top:73px;width:20px;height:824px;background:#fafafa;border-left:1px solid #e6e6e6"></div>
<div class="a" style="left:626px;top:897px;width:951px;height:18px;background:#f9f9f9;border-top:1px solid #e6e6e6"></div>
<div class="a" style="left:1562px;top:310.7px;width:10.5px;height:378.2px;background:#808080;border-radius:5.5px"></div>
<div class="a" style="left:1046px;top:902px;width:382px;height:10px;background:#808080;border-radius:5px"></div>
<div class="a" style="left:626px;top:915px;width:951px;height:40px;background:#fdfdfd;border-top:1px solid #e2e2e2"></div>
<svg style="left:637.7px;top:927.3px;" width="17.5" height="17" viewBox="0 0 17.5 17"><rect x="0.6" y="0.6" width="16.3" height="15.8" rx="2.5" fill="none" stroke="#555" stroke-width="1.2"/><rect x="3" y="3" width="2.6" height="11" rx="0.8" fill="#555"/></svg>
<svg style="left:668.3px;top:926.3px;" width="18.5" height="18.5" viewBox="0 0 18.5 18.5"><circle cx="9.25" cy="9.25" r="8.5" fill="none" stroke="#555" stroke-width="1.2"/><circle cx="9.25" cy="4.4" r="1.2" fill="#555"/><path d="M4.5 6.6H14M9.25 6.6V10.5L6.8 14.8M9.25 10.5L11.7 14.8" fill="none" stroke="#555" stroke-width="1.2"/></svg>
<svg style="left:702.7px;top:926.3px;" width="19" height="18.5" viewBox="0 0 19 18.5"><circle cx="9.5" cy="9.25" r="8.5" fill="none" stroke="#555" stroke-width="1.3"/><path d="M9.5 0.75A8.5 8.5 0 0 0 9.5 17.75Z" fill="#555"/><path d="M9.5 4A5.25 5.25 0 0 1 9.5 14.5Z" fill="#555"/></svg>
<svg style="left:737.7px;top:924.3px;" width="19" height="20" viewBox="0 0 19 20"><rect x="0.6" y="7" width="12" height="12.4" rx="1.5" fill="none" stroke="#555" stroke-width="1.2"/><path d="M10.5 3.2Q15.8 3 16.8 8.5M8.8 3.3L11 1M8.8 3.3L11 5.4" fill="none" stroke="#555" stroke-width="1.1"/></svg>
<svg style="left:770px;top:927.3px;" width="17.5" height="17" viewBox="0 0 17.5 17"><rect x="0.6" y="0.6" width="16.3" height="15.8" rx="2" fill="none" stroke="#bdbdbd" stroke-width="1.2"/><path d="M8.75 0.6V16.4" stroke="#bdbdbd" stroke-width="1.2"/></svg>
<svg style="left:808.3px;top:927.3px;" width="11" height="17" viewBox="0 0 11 17"><rect x="0.6" y="0.6" width="9.8" height="15.8" rx="2" fill="none" stroke="#555" stroke-width="1.2"/><path d="M4 2.8H7" stroke="#555" stroke-width="1"/></svg>
<div class="t" style="left:838.5px;top:929.2px;font-size:15px;line-height:15px;color:#555;letter-spacing:0.2px;">iPhone 14 Pro</div>
<svg style="left:1046.9px;top:926px;" width="18.5" height="18.5" viewBox="0 0 18.5 18.5"><circle cx="7.5" cy="7.5" r="6.7" fill="none" stroke="#555" stroke-width="1.3"/><path d="M4.3 7.5H10.7" stroke="#555" stroke-width="1.3"/><path d="M12.4 12.4L17.6 17.6" stroke="#555" stroke-width="1.6"/></svg>
<div class="t" style="left:1085.5px;top:929.2px;font-size:15px;line-height:15px;color:#555;letter-spacing:0.3px;">56%</div>
<svg style="left:1136px;top:926px;" width="18.5" height="18.5" viewBox="0 0 18.5 18.5"><circle cx="7.5" cy="7.5" r="6.7" fill="none" stroke="#555" stroke-width="1.3"/><path d="M4.3 7.5H10.7M7.5 4.3V10.7" stroke="#555" stroke-width="1.3"/><path d="M12.4 12.4L17.6 17.6" stroke="#555" stroke-width="1.6"/></svg>
<svg style="left:1401px;top:926px;" width="20.5" height="19" viewBox="0 0 20.5 19"><path d="M0.6 5V0.6H5M15.5 0.6H19.9V5M19.9 14V18.4H15.5M5 18.4H0.6V14" fill="none" stroke="#b5b5b5" stroke-width="1.2"/><path d="M14.5 9.5A4.8 4.8 0 1 1 12.6 5.6M12.8 3.3V6H10" fill="none" stroke="#b5b5b5" stroke-width="1.2"/></svg>
<svg style="left:1435px;top:926px;" width="21" height="20" viewBox="0 0 21 20"><path d="M0.6 0V20" stroke="#555" stroke-width="1.3"/><rect x="3.4" y="3" width="10" height="5.3" rx="0.6" fill="none" stroke="#555" stroke-width="1.2"/><rect x="3.4" y="11.2" width="16.8" height="5.3" rx="0.6" fill="none" stroke="#555" stroke-width="1.2"/></svg>
<svg style="left:1470px;top:926px;" width="21" height="20" viewBox="0 0 21 20"><rect x="6" y="6" width="9" height="8.5" fill="none" stroke="#555" stroke-width="1.2"/><path d="M10.5 0.6V6M10.5 14.5V19.4M7.5 0.6H13.5M7.5 19.4H13.5M0.6 10.25H6M15 10.25H20.4M0.6 7.5V13M20.4 7.5V13" fill="none" stroke="#555" stroke-width="1.1"/></svg>
<svg style="left:1504.7px;top:928px;" width="21" height="15" viewBox="0 0 21 15"><path d="M10.5 1.2L17 13.5H4Z" fill="none" stroke="#555" stroke-width="1.2" stroke-linejoin="round"/><circle cx="10.5" cy="9" r="1.6" fill="#555"/><path d="M0.6 7.5H4.2M16.8 7.5H20.4M0.6 5V10M20.4 5V10" stroke="#555" stroke-width="1.1"/></svg>
<svg style="left:1541.6px;top:926px;" width="20.5" height="20" viewBox="0 0 20.5 20"><path d="M5.5 3.3H0.6V19.4H19.9V3.3H15" fill="none" stroke="#555" stroke-width="1.3"/><path d="M10.25 0V12.5M6 8.6L10.25 12.8L14.5 8.6" fill="none" stroke="#555" stroke-width="1.3"/></svg>
<div class="a" style="left:1578px;top:0px;width:342px;height:955px;background:#f3f0ed"></div>
<div class="a" style="left:1578px;top:35px;width:342px;height:1px;background:#dedbd7"></div>
<svg style="left:1624.7px;top:8px;" width="15" height="17" viewBox="0 0 15 17"><path d="M1.2 2.2Q1.2 0.7 2.7 0.7H8.7L14.3 6.3V14.8Q14.3 16.3 12.8 16.3H2.7Q1.2 16.3 1.2 14.8Z" fill="none" stroke="#5a5754" stroke-width="1.3"/><path d="M8.7 0.7V4.8Q8.7 6.3 10.2 6.3H14.3" fill="none" stroke="#5a5754" stroke-width="1.3"/></svg>
<svg style="left:1662.4px;top:8px;" width="18" height="18" viewBox="0 0 18 18"><circle cx="9" cy="9" r="8.2" fill="none" stroke="#5a5754" stroke-width="1.3"/><path d="M9 3.8V9.4H5.2" fill="none" stroke="#5a5754" stroke-width="1.3"/></svg>
<svg style="left:1702.4px;top:8px;" width="18" height="18" viewBox="0 0 18 18"><circle cx="9" cy="9" r="8.2" fill="none" stroke="#5a5754" stroke-width="1.3"/><path d="M6.6 7Q6.6 4.4 9 4.4Q11.4 4.4 11.4 6.6Q11.4 8 9.9 8.8Q9 9.4 9 10.8" fill="none" stroke="#5a5754" stroke-width="1.3"/><circle cx="9" cy="13.3" r="0.9" fill="#5a5754"/></svg>
<svg style="left:1742px;top:9px;" width="18" height="15" viewBox="0 0 18 15"><rect x="0.7" y="0.7" width="16.6" height="13.6" rx="1.8" fill="none" stroke="#5a5754" stroke-width="1.3"/><rect x="3.2" y="3.4" width="5.4" height="4.6" fill="none" stroke="#5a5754" stroke-width="1.1"/><path d="M10.2 3.8H14.8M10.2 6.6H14.8M3.2 10.4H14.8" stroke="#5a5754" stroke-width="1.1"/></svg>
<svg style="left:1782.3px;top:7.5px;" width="18" height="18" viewBox="0 0 18 18"><path d="M0.5 3H17.5M0.5 9H17.5M0.5 15H17.5" stroke="#2f6df0" stroke-width="1.6"/><circle cx="12" cy="3" r="2.2" fill="#2f6df0"/><circle cx="5" cy="9" r="2.2" fill="#2f6df0"/><circle cx="12" cy="15" r="2.2" fill="#2f6df0"/></svg>
<svg style="left:1821.7px;top:9px;" width="17" height="16" viewBox="0 0 17 16"><path d="M1 1V15.2H16.2Z" fill="none" stroke="#5a5754" stroke-width="1.3" stroke-linejoin="round"/><path d="M4.2 8.5V12.2H7.9Z" fill="none" stroke="#5a5754" stroke-width="1.1"/></svg>
<svg style="left:1862px;top:9px;" width="17" height="15" viewBox="0 0 17 15"><path d="M13.3 3.2A6.4 6.4 0 1 0 13.3 11.8" fill="none" stroke="#5a5754" stroke-width="1.5"/><circle cx="8.5" cy="7.5" r="2.6" fill="#5a5754"/><path d="M8.5 7.5H16.5" stroke="#5a5754" stroke-width="1.5"/></svg>
<div class="t" style="left:1587.5px;top:44.0px;font-size:15.6px;line-height:15.6px;color:#6b6866;letter-spacing:1.2px;-webkit-text-stroke:0.81px #6b6866;">Bar Button Item</div>
<div class="t" style="right:235.0px;top:80.1px;font-size:14px;line-height:14px;color:#262626;text-align:right;letter-spacing:0.25px;">Style</div>
<div class="a" style="left:1691px;top:75.4px;width:223.5px;height:22px;background:#fff;border-radius:6px;box-shadow:0 0 0 0.5px rgba(0,0,0,0.12),0 1px 1.5px rgba(0,0,0,0.22)"></div>
<div class="a" style="left:1895.8px;top:78.4px;width:15.7px;height:16px;background:#2f75f2;border-radius:4px"></div>
<svg style="left:1899.6px;top:80.9px;" width="8" height="11" viewBox="0 0 8 11"><path d="M1.2 4L4 1.3L6.8 4M1.2 7L4 9.7L6.8 7" fill="none" stroke="#fff" stroke-width="1.3"/></svg>
<div class="t" style="left:1699.5px;top:79.0px;font-size:15px;line-height:15px;color:#262626;letter-spacing:0.3px;">Bordered</div>
<div class="t" style="right:235.0px;top:109.1px;font-size:14px;line-height:14px;color:#262626;text-align:right;letter-spacing:0.25px;">System Item</div>
<div class="a" style="left:1691px;top:104.8px;width:223.5px;height:22px;background:#fff;border-radius:6px;box-shadow:0 0 0 0.5px rgba(0,0,0,0.12),0 1px 1.5px rgba(0,0,0,0.22)"></div>
<div class="a" style="left:1895.8px;top:107.8px;width:15.7px;height:16px;background:#2f75f2;border-radius:4px"></div>
<svg style="left:1899.6px;top:110.3px;" width="8" height="11" viewBox="0 0 8 11"><path d="M1.2 4L4 1.3L6.8 4M1.2 7L4 9.7L6.8 7" fill="none" stroke="#fff" stroke-width="1.3"/></svg>
<div class="t" style="left:1699.5px;top:108.3px;font-size:15px;line-height:15px;color:#262626;letter-spacing:0.3px;">Action</div>
<div class="t" style="right:235.0px;top:136.9px;font-size:14px;line-height:14px;color:#262626;text-align:right;letter-spacing:0.25px;">Tint</div>
<div class="a" style="left:1691px;top:132.8px;width:223.5px;height:22px;background:#fff;border-radius:6px;box-shadow:0 0 0 0.5px rgba(0,0,0,0.12),0 1px 1.5px rgba(0,0,0,0.22)"></div>
<div class="a" style="left:1895.8px;top:135.8px;width:15.7px;height:16px;background:#2f75f2;border-radius:4px"></div>
<svg style="left:1899.6px;top:138.3px;" width="8" height="11" viewBox="0 0 8 11"><path d="M1.2 4L4 1.3L6.8 4M1.2 7L4 9.7L6.8 7" fill="none" stroke="#fff" stroke-width="1.3"/></svg>
<div class="t" style="left:1741.5px;top:136.4px;font-size:15px;line-height:15px;color:#262626;letter-spacing:0.3px;">Default</div>
<svg style="left:1699.2px;top:138.1px;" width="37" height="11" viewBox="0 0 37 11"><rect x="0.5" y="0.5" width="36" height="10" fill="#fff" stroke="#dcdcdc" stroke-width="0.8"/><path d="M1 10.5L36.5 0.8" stroke="#ee6a6a" stroke-width="0.9"/></svg>
<svg style="left:1586px;top:139.4px;" width="10" height="10" viewBox="0 0 10 10"><path d="M5 0V10M0 5H10" stroke="#8a8a8a" stroke-width="1"/></svg>
<div class="t" style="right:235.0px;top:163.9px;font-size:14px;line-height:14px;color:#262626;text-align:right;letter-spacing:0.25px;">Drag and Drop</div>
<div class="a" style="left:1691.4px;top:163.8px;width:15.5px;height:15.5px;background:#fff;border-radius:3.5px;box-shadow:0 0 0 0.5px rgba(0,0,0,0.15),0 0.5px 1.5px rgba(0,0,0,0.2)"></div>
<div class="t" style="left:1712.5px;top:163.2px;font-size:15px;line-height:15px;color:#262626;letter-spacing:0.3px;">Spring Loaded</div>
<div class="t" style="right:235.0px;top:188.5px;font-size:14px;line-height:14px;color:#262626;text-align:right;letter-spacing:0.25px;">Menu</div>
<div class="a" style="left:1691.4px;top:188px;width:15.5px;height:15.5px;background:#fff;border-radius:3.5px;box-shadow:0 0 0 0.5px rgba(0,0,0,0.15),0 0.5px 1.5px rgba(0,0,0,0.2)"></div>
<div class="t" style="left:1712.5px;top:187.8px;font-size:15px;line-height:15px;color:#262626;letter-spacing:0.35px;">Selection as Primary Action</div>
<div class="a" style="left:1588.8px;top:221px;width:324.5px;height:1px;background:#dcd9d5"></div>
<div class="t" style="left:1587.5px;top:231.8px;font-size:15.6px;line-height:15.6px;color:#6b6866;letter-spacing:1.2px;-webkit-text-stroke:0.81px #6b6866;">Bar Item</div>
<div class="t" style="right:235.0px;top:268.9px;font-size:14px;line-height:14px;color:#262626;text-align:right;letter-spacing:0.25px;">Title</div>
<div class="a" style="left:1691px;top:264.7px;width:222.5px;height:22px;background:#fff;box-shadow:0 0 0 0.5px rgba(0,0,0,0.1),0 1px 1px rgba(0,0,0,0.18)"></div>
<div class="t" style="right:235.0px;top:298.9px;font-size:14px;line-height:14px;color:#262626;text-align:right;letter-spacing:0.25px;">Image</div>
<div class="a" style="left:1691px;top:295.4px;width:223px;height:21.5px;background:#fff;border-radius:6px;box-shadow:0 0 0 0.5px rgba(0,0,0,0.12),0 1px 1.5px rgba(0,0,0,0.22)"></div>
<div class="a" style="left:1898.3px;top:298.4px;width:15.2px;height:15.5px;background:#2f75f2;border-radius:4px"></div>
<svg style="left:1902.3999999999999px;top:303.65px;" width="7" height="5" viewBox="0 0 7 5"><path d="M0.8 0.8L3.5 3.6L6.2 0.8" fill="none" stroke="#fff" stroke-width="1.3"/></svg>
<div class="t" style="left:1701.5px;top:298.7px;font-size:15px;line-height:15px;color:#b9b9b9;letter-spacing:0.3px;">Image</div>
<div class="t" style="right:235.0px;top:329.3px;font-size:14px;line-height:14px;color:#262626;text-align:right;letter-spacing:0.25px;">Landscape</div>
<div class="a" style="left:1691px;top:325.5px;width:223px;height:21.5px;background:#fff;border-radius:6px;box-shadow:0 0 0 0.5px rgba(0,0,0,0.12),0 1px 1.5px rgba(0,0,0,0.22)"></div>
<div class="a" style="left:1898.3px;top:328.5px;width:15.2px;height:15.5px;background:#2f75f2;border-radius:4px"></div>
<svg style="left:1902.3999999999999px;top:333.75px;" width="7" height="5" viewBox="0 0 7 5"><path d="M0.8 0.8L3.5 3.6L6.2 0.8" fill="none" stroke="#fff" stroke-width="1.3"/></svg>
<div class="t" style="left:1701.5px;top:328.8px;font-size:15px;line-height:15px;color:#b9b9b9;letter-spacing:0.3px;">Image (iPhone)</div>
<div class="t" style="right:235.0px;top:360.1px;font-size:14px;line-height:14px;color:#262626;text-align:right;letter-spacing:0.25px;">Accessibility</div>
<div class="a" style="left:1691px;top:356.4px;width:223px;height:21.5px;background:#fff;border-radius:6px;box-shadow:0 0 0 0.5px rgba(0,0,0,0.12),0 1px 1.5px rgba(0,0,0,0.22)"></div>
<div class="a" style="left:1898.3px;top:359.4px;width:15.2px;height:15.5px;background:#2f75f2;border-radius:4px"></div>
<svg style="left:1902.3999999999999px;top:364.65px;" width="7" height="5" viewBox="0 0 7 5"><path d="M0.8 0.8L3.5 3.6L6.2 0.8" fill="none" stroke="#fff" stroke-width="1.3"/></svg>
<div class="t" style="left:1701.5px;top:359.7px;font-size:15px;line-height:15px;color:#b9b9b9;letter-spacing:0.3px;">Large Content Size Image</div>
<div class="t" style="right:235.0px;top:391.1px;font-size:14px;line-height:14px;color:#262626;text-align:right;letter-spacing:0.25px;">Tag</div>
<div class="a" style="left:1691px;top:387px;width:206px;height:21.5px;background:#fff;box-shadow:0 0 0 0.5px rgba(0,0,0,0.1),0 1px 1px rgba(0,0,0,0.18)"></div>
<div class="t" style="right:27.0px;top:390.2px;font-size:15px;line-height:15px;color:#262626;text-align:right;">0</div>
<div class="a" style="left:1899.6px;top:387px;width:15px;height:21px;background:#fff;border-radius:5px;box-shadow:0 0 0 0.5px rgba(0,0,0,0.12),0 1px 1px rgba(0,0,0,0.18)"></div>
<svg style="left:1903.5px;top:389.5px;" width="7.5" height="16" viewBox="0 0 7.5 16"><path d="M0.8 4.4L3.75 1.3L6.7 4.4M0.8 11.6L3.75 14.7L6.7 11.6" fill="none" stroke="#333" stroke-width="1.2"/></svg>
<div class="a" style="left:1691.4px;top:418px;width:15.5px;height:15.6px;background:#2f75f2;border-radius:3.5px"></div>
<svg style="left:1693.5px;top:420.5px;" width="11.5" height="10.5" viewBox="0 0 11.5 10.5"><path d="M1.2 5.6L4.3 8.8L10.3 1.2" fill="none" stroke="#fff" stroke-width="1.8"/></svg>
<div class="t" style="left:1712.5px;top:418.2px;font-size:15px;line-height:15px;color:#262626;letter-spacing:0.2px;">Enabled</div>
<div class="a" style="left:1588.8px;top:451px;width:324.5px;height:1px;background:#dcd9d5"></div>
</body></html>
